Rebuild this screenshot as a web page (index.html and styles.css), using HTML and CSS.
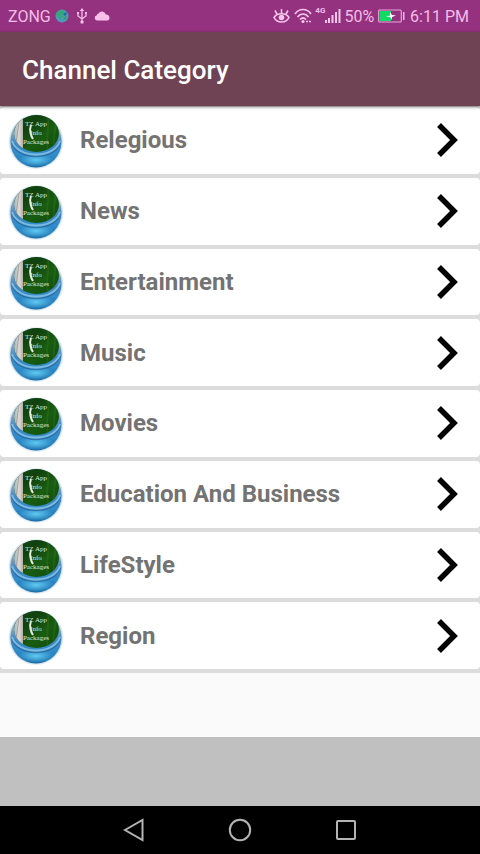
FILE: index.html
```
<!DOCTYPE html>
<html lang="en">
<head>
<meta charset="utf-8">
<meta name="viewport" content="width=device-width, initial-scale=1">
<title>Channel Category</title>
<link rel="stylesheet" href="styles.css">
</head>
<body>
<svg class="defs" aria-hidden="true">
  <defs>
    <linearGradient id="rim" x1="0" y1="0" x2="0" y2="1">
      <stop offset="0" stop-color="#8fb0b8"/>
      <stop offset=".3" stop-color="#86abc8"/>
      <stop offset=".55" stop-color="#3f86c2"/>
      <stop offset=".75" stop-color="#2f8dcb"/>
      <stop offset="1" stop-color="#1a6aa5"/>
    </linearGradient>
    <radialGradient id="glow" cx=".5" cy=".5" r=".5">
      <stop offset="0" stop-color="#5fcaf2"/>
      <stop offset="1" stop-color="#5fcaf2" stop-opacity="0"/>
    </radialGradient>
    <radialGradient id="halo" cx=".5" cy=".5" r=".5">
      <stop offset=".88" stop-color="#5f95b5" stop-opacity=".7"/>
      <stop offset="1" stop-color="#9fc4da" stop-opacity="0"/>
    </radialGradient>
    <linearGradient id="green" x1="0" y1="0" x2="1" y2="1">
      <stop offset="0" stop-color="#0c4a16"/>
      <stop offset=".35" stop-color="#11420f"/>
      <stop offset=".6" stop-color="#1a5c12"/>
      <stop offset="1" stop-color="#0b470a"/>
    </linearGradient>
    <linearGradient id="white" x1="0" y1="0" x2="1" y2="0">
      <stop offset="0" stop-color="#9badb5"/>
      <stop offset=".6" stop-color="#dcd9d6"/>
      <stop offset="1" stop-color="#b4afa5"/>
    </linearGradient>
    <clipPath id="face"><ellipse cx="28.500" cy="22.500" rx="22.500" ry="18.500"/></clipPath>
  </defs>
  <symbol id="logo" viewBox="0 0 56 58">
    <ellipse cx="28" cy="30.500" rx="28" ry="28" fill="url(#halo)"/>
    <ellipse cx="28" cy="30.500" rx="25.500" ry="26" fill="url(#rim)"/>
    <ellipse cx="28" cy="49" rx="18" ry="7" fill="url(#glow)"/>
    <path d="M4 32C7 41 17 45.500 28 45.500S49 41 52 32" fill="none" stroke="#2a5f94" stroke-width="1.500" opacity=".7"/>
    <path d="M4 30C7 39 17 43.500 28 43.500S49 39 52 30" fill="none" stroke="#7db9de" stroke-width="2"/>
    <g clip-path="url(#face)">
      <rect width="56" height="44" fill="url(#green)"/>
      <rect x="5" width="10" height="44" fill="url(#white)"/>
      <path d="M12 3l-4 30" stroke="#a7a29b" stroke-width="1"/>
      <path d="M39 3c5 12-4 23 2 38M46 7c4 9-2 18 0 28" stroke="#297019" stroke-width="2" fill="none" opacity=".5"/>
    </g>
    <path d="M23 14c-2 5 0 11 2 14" fill="none" stroke="#e6ece1" stroke-width="2"/>
  </symbol>
  <symbol id="chevron" viewBox="0 0 22 36"><path d="M3 3l15 15L3 33" fill="none" stroke="#050505" stroke-width="5.500"/></symbol>
</svg>

<div class="screen">
  <div class="status">
    <div class="status-left">
      <span>ZONG</span>
      <svg class="globe" width="14" height="14" viewBox="0 0 14 14"><circle cx="7" cy="7" r="6.500" fill="#4a9cbc"/><path d="M2 3l4-2 3 1 1 3-3 1 1 2-3 3-2-3-2-1z" fill="#35a879"/><path d="M9 8l3-1-1 3-3 2z" fill="#3a9a70"/><path d="M8 5l3-2 1 2-2 2z" fill="#28699a"/></svg>
      <svg class="usb" width="12" height="16" viewBox="0 0 12 16" fill="none" stroke="#f5bde8" stroke-width="1.300"><path d="M6 2v11M2 5v3l4 3 4-3V5"/><path d="M6 0l2.200 3H3.800zM1 4h2v2H1zM9 4h2v2H9z" fill="#f5bde8" stroke="none"/><circle cx="6" cy="14" r="1.700" fill="#f5bde8" stroke="none"/></svg>
      <svg width="16" height="10" viewBox="0 0 16 10"><path d="M3 9.500a2.700 2.700 0 0 1-.2-5.300A2.500 2.500 0 0 1 4.500 2.500 4 4 0 0 1 11.800 3.500a3 3 0 0 1 1.200 6z" fill="#f7bfea"/></svg>
    </div>
    <div class="status-right">
      <svg width="17" height="16" viewBox="0 0 17 16" fill="none" stroke="#f5c5ec" stroke-width="1.600"><path d="M1 9.500c3-5 12-5 15 0-3 6-12 6-15 0zM8.500 5V1M4 6L2 2.500M13 6l2-3.500"/><circle cx="8.500" cy="9.500" r="2.800" fill="#f5c5ec" stroke="none"/></svg>
      <svg class="wifi" width="18" height="16" viewBox="0 0 18 16" fill="none" stroke="#f5c5ec" stroke-width="1.700"><path d="M1 6c4-6 12-6 16 0M3.500 9c3-4 8-4 11 0M6 11.500c2-2 4-2 6 0"/><circle cx="9" cy="13.500" r="1.600" fill="#f5c5ec" stroke="none"/><path d="M12 13.500h5" stroke-dasharray="2 1"/></svg>
      <span class="net">4G</span>
      <svg width="16" height="14" viewBox="0 0 16 14" fill="#f5c5ec"><path d="M0 11h2v3H0zM3 9h2v5H3zM6.500 6h2v8h-2zM10 3h2v11h-2zM13.500 0h2v14h-2z"/></svg>
      <span class="percent">50%</span>
      <svg class="battery" width="27" height="14" viewBox="0 0 27 14"><rect x=".7" y="1" width="22.600" height="12" rx="1" fill="none" stroke="#e7a5dc" stroke-width="1.200"/><path d="M2 2h11v10H2z" fill="#13d965"/><path d="M8 7.500l4-1V3l2 3 4 .5-4 1.500v3L12 8z" fill="#fff"/><path d="M25 3h1.500v8H25z" fill="#efb9e5"/></svg>
      <span>6:11 PM</span>
    </div>
  </div>

  <header class="appbar"><h1>Channel Category</h1></header>

  <main>
    <ul class="list">
      <li><a href="#relegious"><span class="logo"><svg><use href="#logo"/></svg><span class="caption">TZ App<br>Info<br>Packages</span></span><span class="name">Relegious</span><svg class="chevron"><use href="#chevron"/></svg></a></li>
      <li><a href="#news"><span class="logo"><svg><use href="#logo"/></svg><span class="caption">TZ App<br>Info<br>Packages</span></span><span class="name">News</span><svg class="chevron"><use href="#chevron"/></svg></a></li>
      <li><a href="#entertainment"><span class="logo"><svg><use href="#logo"/></svg><span class="caption">TZ App<br>Info<br>Packages</span></span><span class="name">Entertainment</span><svg class="chevron"><use href="#chevron"/></svg></a></li>
      <li><a href="#music"><span class="logo"><svg><use href="#logo"/></svg><span class="caption">TZ App<br>Info<br>Packages</span></span><span class="name">Music</span><svg class="chevron"><use href="#chevron"/></svg></a></li>
      <li><a href="#movies"><span class="logo"><svg><use href="#logo"/></svg><span class="caption">TZ App<br>Info<br>Packages</span></span><span class="name">Movies</span><svg class="chevron"><use href="#chevron"/></svg></a></li>
      <li><a href="#education"><span class="logo"><svg><use href="#logo"/></svg><span class="caption">TZ App<br>Info<br>Packages</span></span><span class="name">Education And Business</span><svg class="chevron"><use href="#chevron"/></svg></a></li>
      <li><a href="#lifestyle"><span class="logo"><svg><use href="#logo"/></svg><span class="caption">TZ App<br>Info<br>Packages</span></span><span class="name">LifeStyle</span><svg class="chevron"><use href="#chevron"/></svg></a></li>
      <li><a href="#region"><span class="logo"><svg><use href="#logo"/></svg><span class="caption">TZ App<br>Info<br>Packages</span></span><span class="name">Region</span><svg class="chevron"><use href="#chevron"/></svg></a></li>
    </ul>
  </main>

  <div class="banner"></div>

  <nav class="navbar">
    <button type="button" aria-label="Back"><svg width="22" height="24" viewBox="0 0 22 24"><path d="M2 12L19.500 2v20z"/></svg></button>
    <button type="button" aria-label="Home"><svg width="24" height="24" viewBox="0 0 24 24"><circle cx="12" cy="12" r="10.200"/></svg></button>
    <button type="button" aria-label="Recent apps"><svg width="22" height="22" viewBox="0 0 22 22"><rect x="2" y="2" width="18" height="18" rx="1"/></svg></button>
  </nav>
</div>
</body>
</html>
```

FILE: styles.css
```
* {
  box-sizing: border-box;
}

body {
  margin: 0;
  font-family: Roboto, "Liberation Sans", sans-serif;
  background: #fafafa;
}

.defs {
  position: absolute;
  width: 0;
  height: 0;
}

.screen {
  display: flex;
  flex-direction: column;
  min-height: 100vh;
}

.status,
.appbar,
.banner,
.navbar {
  flex-shrink: 0;
}

.status {
  display: flex;
  justify-content: space-between;
  align-items: center;
  height: 32px;
  padding: 0 11px 0 8px;
  background: #95327f;
  color: #f3bce8;
  font-size: 16px;
}

.status-left,
.status-right {
  display: flex;
  align-items: center;
}

.globe {
  margin-left: 4px;
}

.usb {
  margin: 0 6px 0 7px;
}

.wifi {
  margin: 0 3px 0 4px;
}

.net {
  align-self: flex-start;
  font-size: 8px;
  font-weight: 700;
  line-height: 8px;
}

.percent {
  margin-left: 3px;
}

.battery {
  margin: 0 5px 0 4px;
}

.appbar {
  position: relative;
  display: flex;
  align-items: center;
  height: 74px;
  padding: 2px 22px 0;
  background: #704354;
  box-shadow: 0 1px 3px rgba(0, 0, 0, 0.5);
}

h1 {
  margin: 0;
  color: #fff;
  font-size: 26px;
  font-weight: 500;
}

main {
  display: flex;
  flex: 1;
  padding-bottom: 64px;
}

.list {
  display: grid;
  flex: 1;
  grid-auto-rows: 1fr;
  gap: 4px;
  margin: 0;
  padding: 1px 0 4px;
  list-style: none;
  background: #dcdcdc;
}

.list a {
  display: flex;
  align-items: center;
  height: 100%;
  min-height: 62px;
  padding: 0 22px 0 8px;
  border-radius: 4px;
  background: #fff;
  color: #737373;
  font-size: 24px;
  font-weight: 700;
  text-decoration: none;
}

.name {
  flex: 1;
  margin-left: 16px;
}

.logo {
  position: relative;
  width: 56px;
  height: 58px;
}

.logo svg {
  display: block;
  width: 100%;
  height: 100%;
}

.caption {
  position: absolute;
  top: 9px;
  left: 0;
  width: 100%;
  color: #dfe8d9;
  font-family: "Liberation Serif", serif;
  font-size: 7px;
  font-weight: 400;
  line-height: 9px;
  text-align: center;
}

.chevron {
  width: 22px;
  height: 36px;
}

.banner {
  height: 69px;
  background: #c0c0c0;
}

.navbar {
  display: flex;
  justify-content: center;
  gap: 58px;
  height: 48px;
  background: #000;
}

.navbar button {
  display: flex;
  align-items: center;
  justify-content: center;
  width: 48px;
  padding: 0;
  border: 0;
  background: none;
}

.navbar svg {
  fill: none;
  stroke: #b4b4b4;
  stroke-width: 2;
}
```
